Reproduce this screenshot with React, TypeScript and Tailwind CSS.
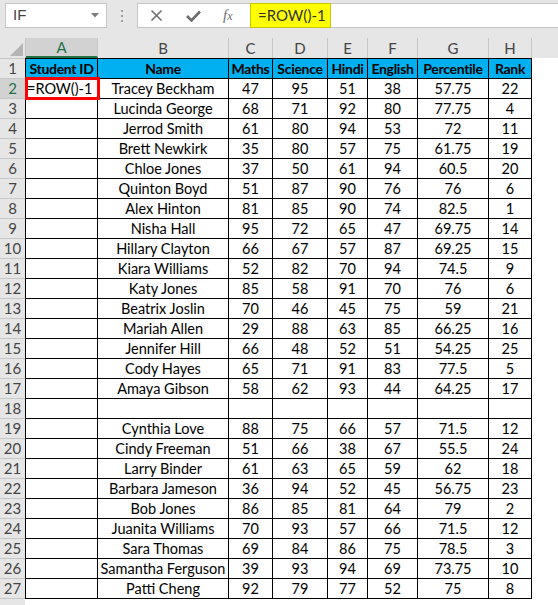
import React from "react";

const cols = [
  { k: "A", w: 72 },
  { k: "B", w: 131 },
  { k: "C", w: 44 },
  { k: "D", w: 55 },
  { k: "E", w: 40 },
  { k: "F", w: 50 },
  { k: "G", w: 71 },
  { k: "H", w: 43 },
];

const headers = ["Student ID", "Name", "Maths", "Science", "Hindi", "English", "Percentile", "Rank"];

const data: (string[] | null)[] = [
  ["Tracey Beckham", "47", "95", "51", "38", "57.75", "22"],
  ["Lucinda George", "68", "71", "92", "80", "77.75", "4"],
  ["Jerrod Smith", "61", "80", "94", "53", "72", "11"],
  ["Brett Newkirk", "35", "80", "57", "75", "61.75", "19"],
  ["Chloe Jones", "37", "50", "61", "94", "60.5", "20"],
  ["Quinton Boyd", "51", "87", "90", "76", "76", "6"],
  ["Alex Hinton", "81", "85", "90", "74", "82.5", "1"],
  ["Nisha Hall", "95", "72", "65", "47", "69.75", "14"],
  ["Hillary Clayton", "66", "67", "57", "87", "69.25", "15"],
  ["Kiara Williams", "52", "82", "70", "94", "74.5", "9"],
  ["Katy Jones", "85", "58", "91", "70", "76", "6"],
  ["Beatrix Joslin", "70", "46", "45", "75", "59", "21"],
  ["Mariah Allen", "29", "88", "63", "85", "66.25", "16"],
  ["Jennifer Hill", "66", "48", "52", "51", "54.25", "25"],
  ["Cody Hayes", "65", "71", "91", "83", "77.5", "5"],
  ["Amaya Gibson", "58", "62", "93", "44", "64.25", "17"],
  null,
  ["Cynthia Love", "88", "75", "66", "57", "71.5", "12"],
  ["Cindy Freeman", "51", "66", "38", "67", "55.5", "24"],
  ["Larry Binder", "61", "63", "65", "59", "62", "18"],
  ["Barbara Jameson", "36", "94", "52", "45", "56.75", "23"],
  ["Bob Jones", "86", "85", "81", "64", "79", "2"],
  ["Juanita Williams", "70", "93", "57", "66", "71.5", "12"],
  ["Sara Thomas", "69", "84", "86", "75", "78.5", "3"],
  ["Samantha Ferguson", "39", "93", "94", "69", "73.75", "10"],
  ["Patti Cheng", "92", "79", "77", "52", "75", "8"],
];

export default function App() {
  return (
    <div className="w-[558px] h-[605px] overflow-hidden bg-white font-['Lato',sans-serif] text-[14.5px] text-black">
      {/* formula bar */}
      <div className="h-[38px] bg-[#e6e6e6] flex items-start pt-[3px]">
        <div className="ml-[5px] w-[102px] h-[25px] bg-white border border-[#c6c6c6] flex items-center justify-between pl-[7px] pr-[7px]">
          <span className="text-[15px] text-[#444] font-['Liberation_Sans',sans-serif]">IF</span>
          <svg width="8" height="5" viewBox="0 0 8 5"><polygon points="0,0 8,0 4,4.5" fill="#7a7a7a" /></svg>
        </div>
        <div className="w-[30px] h-[25px] flex flex-col items-center justify-center gap-[3px]">
          <div className="w-[2px] h-[2px] bg-[#a0a0a0]" />
          <div className="w-[2px] h-[2px] bg-[#a0a0a0]" />
          <div className="w-[2px] h-[2px] bg-[#a0a0a0]" />
        </div>
        <div className="flex-1 h-[25px] bg-white border border-[#c6c6c6] border-r-0 flex items-stretch">
          <div className="w-[112px] flex items-center">
            <div className="w-[13px] ml-[12px]">
              <svg width="13" height="13" viewBox="0 0 13 13">
                <path d="M1.5 1.5 L11.5 11.5 M11.5 1.5 L1.5 11.5" stroke="#6e6e6e" strokeWidth="1.6" />
              </svg>
            </div>
            <div className="ml-[23px]">
              <svg width="15" height="12" viewBox="0 0 15 12">
                <path d="M1 6 L5.5 10.5 L14 1.5" stroke="#6e6e6e" strokeWidth="2.6" fill="none" />
              </svg>
            </div>
            <div className="ml-[22px] text-[#6e6e6e] font-['Liberation_Serif',serif] italic text-[15px] leading-none">
              f<span className="text-[12px]">x</span>
            </div>
          </div>
          <div className="w-[81px] -my-px bg-[#ffff00] border border-[#c8c800] flex items-center pl-[7px] text-[15px] text-[#333]">
            =ROW()-1
          </div>
        </div>
      </div>

      {/* column header row */}
      <div className="flex h-[20px] bg-[#e6e6e6]">
        <div className="w-[26px] border-r border-[#c6c6c6] relative">
          <svg className="absolute left-[10px] top-[5px]" width="13" height="13" viewBox="0 0 13 13">
            <polygon points="13,0 13,13 0,13" fill="#b4b4b4" />
          </svg>
        </div>
        {cols.map((c) =>
          c.k === "A" ? (
            <div
              key={c.k}
              style={{ width: c.w }}
              className="bg-[#d2d2d2] border-r border-[#c6c6c6] border-b-2 border-b-[#217346] flex items-center justify-center text-[15px] text-[#217346]"
            >
              {c.k}
            </div>
          ) : (
            <div
              key={c.k}
              style={{ width: c.w }}
              className="border-r border-[#c6c6c6] flex items-center justify-center text-[15px] text-[#444]"
            >
              {c.k}
            </div>
          )
        )}
        <div className="flex-1" />
      </div>

      {/* row 1 */}
      <div className="flex h-[21px]">
        <div className="w-[25px] bg-[#e6e6e6] border-t border-b border-[#c6c6c6] flex items-center justify-center text-[15px] text-[#444]">
          1
        </div>
        {headers.map((h, i) => (
          <div
            key={h}
            style={{ width: i === 0 ? cols[i].w + 1 : cols[i].w }}
            className={`bg-[#00b0f0] border-t border-b border-r border-black flex items-center justify-center font-bold text-[14px] tracking-[-0.3px] whitespace-nowrap ${i === 0 ? "border-l" : ""}`}
          >
            {h}
          </div>
        ))}
      </div>

      {/* data rows */}
      {data.map((row, ri) => {
        const n = ri + 2;
        const sel = n === 2;
        return (
          <div key={n} className="flex h-[20px]">
            <div
              className={`w-[25px] border-b border-[#c6c6c6] flex items-center justify-center text-[15px] ${sel ? "bg-[#d2d2d2] text-[#217346]" : "bg-[#e6e6e6] text-[#444]"}`}
            >
              {n}
            </div>
            <div
              style={{ width: cols[0].w + 1 }}
              className="border-l border-r border-b border-black relative flex items-center pl-[1px] whitespace-nowrap"
            >
              {sel ? (
                <>
                  <span className="relative z-10">=ROW()-1</span>
                  <div className="absolute z-20 left-[-1px] top-[-2px] w-[75px] h-[23px] border-[3px] border-[#ff0000]" />
                </>
              ) : null}
            </div>
            {cols.slice(1).map((c, ci) => (
              <div
                key={c.k}
                style={{ width: c.w }}
                className="border-r border-b border-black flex items-center justify-center whitespace-nowrap"
              >
                {row ? row[ci] : ""}
              </div>
            ))}
          </div>
        );
      })}

      {/* row 28 partial */}
      <div className="flex h-[20px]">
        <div className="w-[25px] bg-[#e6e6e6] border-b border-[#c6c6c6]" />
      </div>
    </div>
  );
}
